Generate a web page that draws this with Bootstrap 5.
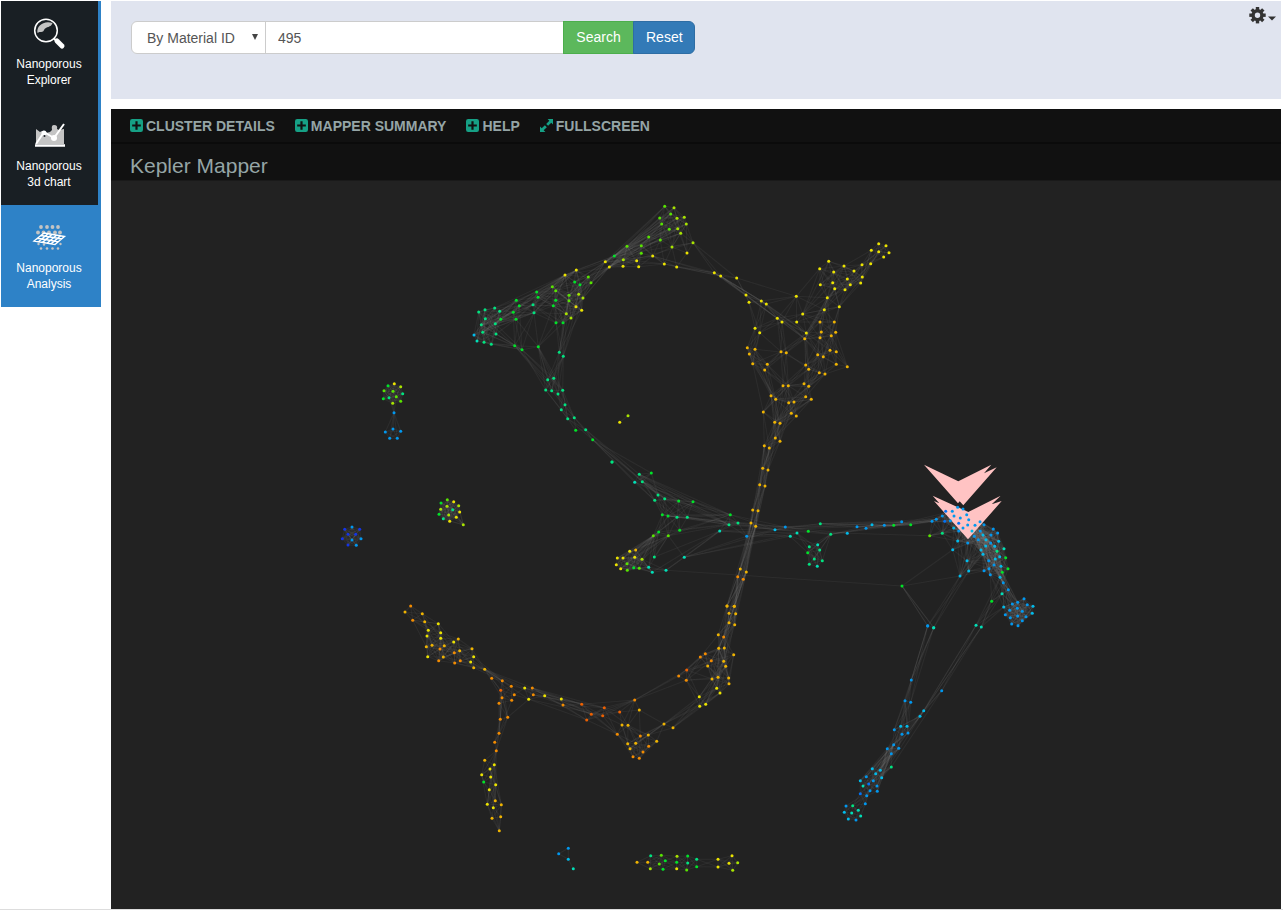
<!DOCTYPE html>
<html lang="en">
<head>
<meta charset="utf-8">
<meta name="viewport" content="width=device-width, initial-scale=1">
<title>Kepler Mapper</title>
<link href="https://cdn.jsdelivr.net/npm/bootstrap@5.3.0/dist/css/bootstrap.min.css" rel="stylesheet">
<style>
body{font-family:"Liberation Sans",Arial,sans-serif;font-size:14px;height:911px;overflow:hidden;background:#fff}
.shell{height:909px;padding:1px 2px 0 1px;gap:10px}
.page-frame{border-bottom:1px solid #ddd;height:910px}
.side{width:100px}
.side a{height:102px;background:#191f24;border-right:3px solid #2e82c7;color:#fff;font-size:12px;line-height:16px;padding-top:12px;padding-right:1px;text-decoration:none}
.side a.active{background:#2e82c7}
.side svg{width:40px;height:40px;margin-bottom:3px}
.searchbar{height:98px;background:#e0e4ef;padding:20px}
.searchbar .input-group{width:564px;height:33px;flex-wrap:nowrap}
.searchbar .form-control,.searchbar .form-select,.searchbar .btn{font-size:14px;line-height:20px;height:33px;padding:5px 12px;color:#555;border-color:#ccc}
.searchbar .form-select{flex:0 0 135px;padding-left:15px;padding-right:20px;background-image:url("data:image/svg+xml,%3Csvg xmlns='http://www.w3.org/2000/svg' viewBox='0 0 8 8'%3E%3Cpath fill='%23444' d='M1 1h6L4 7z'/%3E%3C/svg%3E");background-size:8px 8px;background-position:right 6px top 11px}
.searchbar .btn-find{background:#5cb85c;border-color:#4cae4c;color:#fff;width:71px;line-height:19px}
.searchbar .btn-clear{background:#337ab7;border-color:#2e6da4;color:#fff;width:62px;line-height:19px}
.settings{color:#333;margin:-15px -15px 0 0}
.mapper{margin-top:10px;background:#222}
.mapper-nav{height:35px;background:#111;border-bottom:2px solid #0b0b0b;padding-left:19px;gap:20px}
.mapper-nav a{color:#95a5a6;font-weight:bold;text-decoration:none;line-height:34px;white-space:nowrap}
.mapper-nav svg{width:13px;height:13px;margin-right:3px;fill:#16a085;flex:none}
.mapper h1{height:37px;background:#111;border-bottom:1px solid #1a1a1a;font-size:21px;font-weight:400;color:#95a5a6;line-height:44px;padding-left:19px;margin:0}
#graph{height:728px;width:1170px}
#edges{stroke:#999;stroke-opacity:.095;stroke-width:1.1;fill:none}
</style>
</head>
<body>
<div class="page-frame">
<div class="shell d-flex">
<nav class="side flex-shrink-0">
<a href="#" class="d-flex flex-column align-items-center text-center">
<svg viewBox="0 0 40 40"><circle cx="17" cy="17.500" r="11.300" fill="none" stroke="#fff" stroke-width="1.500"/><path d="M8.500 20C7 13 15 7 23.500 10C22 15 17 13 15 17C14 20 11 18 8.500 20z" fill="#c4c4c4"/><path d="M28 28l5 5" stroke="#fff" stroke-width="5" stroke-linecap="round"/><path d="M24.500 25l4 4" stroke="#fff" stroke-width="2"/></svg>
<span>Nanoporous<br>Explorer</span></a>
<a href="#" class="d-flex flex-column align-items-center text-center">
<svg viewBox="0 0 40 40"><path d="M7 14l4 3 2-1 4 2 4-1 2-2q-1-5 2-5 4 0 3 4l2 1 5-1V29H7z" fill="#c4c4c4"/><path d="M6 30.500h30" stroke="#fff" stroke-width="2.500"/><path d="M7 29l8-12 10 6L35 9" fill="none" stroke="#fff" stroke-width="2"/><circle cx="15" cy="18" r="2.500" fill="#fff"/><circle cx="25" cy="23" r="3" fill="#fff"/><circle cx="15.500" cy="21" r="1" fill="#191f24"/></svg>
<span>Nanoporous<br>3d chart</span></a>
<a href="#" class="active d-flex flex-column align-items-center text-center">
<svg viewBox="0 0 40 40"><g fill="#c4c4c4"><circle cx="12" cy="10" r="1.900"/><circle cx="18" cy="10" r="1.900"/><circle cx="23.500" cy="10" r="1.900"/><circle cx="29" cy="10" r="1.900"/><circle cx="9" cy="15.500" r="1.900"/><circle cx="14.500" cy="15.500" r="1.900"/><circle cx="20" cy="15.500" r="1.900"/><circle cx="26" cy="15.500" r="1.900"/><circle cx="31" cy="15.500" r="1.900"/><circle cx="12" cy="31.500" r="1.300"/><circle cx="18" cy="31.500" r="1.300"/><circle cx="23.500" cy="31.500" r="1.300"/><circle cx="29" cy="31.500" r="1.300"/><circle cx="9.500" cy="27" r="1.200"/><circle cx="15" cy="27.500" r="1.200"/><circle cx="31.500" cy="27" r="1.200"/></g><path d="M15 16L35.500 19.500 26 27.500 5 24zM12 18.500l21 3.500M8.500 21.200l21 3.500M19 16.700l-9.500 8M23 17.400l-9.500 8M27.500 18.200l-9.500 8M31.500 18.900l-9.500 8" fill="none" stroke="#fff" stroke-width="1.400"/></svg>
<span>Nanoporous<br>Analysis</span></a>
</nav>
<main class="flex-grow-1 d-flex flex-column">
<section class="searchbar d-flex justify-content-between">
<div class="input-group">
<select class="form-select"><option>By Material ID</option></select>
<input class="form-control" value="495">
<button class="btn btn-find">Search</button>
<button class="btn btn-clear">Reset</button>
</div>
<div class="settings"><svg class="d-block" width="27" height="18" viewBox="0 0 27 18"><g transform="translate(8.500 9.200)" fill="#333"><circle r="4.400" fill="none" stroke="#333" stroke-width="3.400"/><g id="tooth"><rect x="-1.700" y="-8.200" width="3.400" height="3.400"/><rect x="-1.700" y="4.800" width="3.400" height="3.400"/></g><use href="#tooth" transform="rotate(45)"/><use href="#tooth" transform="rotate(90)"/><use href="#tooth" transform="rotate(135)"/></g><path d="M19 10.500h8l-4 4z" fill="#333"/></svg></div>
</section>
<section class="mapper flex-grow-1">
<nav class="mapper-nav d-flex">
<a href="#" class="d-flex align-items-center"><svg viewBox="0 0 12 12"><path fill-rule="evenodd" d="M2 0h8a2 2 0 0 1 2 2v8a2 2 0 0 1-2 2H2a2 2 0 0 1-2-2V2a2 2 0 0 1 2-2zM5 2v3H2v2h3v3h2V7h3V5H7V2z"/></svg>CLUSTER DETAILS</a>
<a href="#" class="d-flex align-items-center"><svg viewBox="0 0 12 12"><path fill-rule="evenodd" d="M2 0h8a2 2 0 0 1 2 2v8a2 2 0 0 1-2 2H2a2 2 0 0 1-2-2V2a2 2 0 0 1 2-2zM5 2v3H2v2h3v3h2V7h3V5H7V2z"/></svg>MAPPER SUMMARY</a>
<a href="#" class="d-flex align-items-center"><svg viewBox="0 0 12 12"><path fill-rule="evenodd" d="M2 0h8a2 2 0 0 1 2 2v8a2 2 0 0 1-2 2H2a2 2 0 0 1-2-2V2a2 2 0 0 1 2-2zM5 2v3H2v2h3v3h2V7h3V5H7V2z"/></svg>HELP</a>
<a href="#" class="d-flex align-items-center"><svg viewBox="0 0 12 12"><path d="M7 0h5v5l-1.600-1.600L7.500 6.300 5.700 4.500l2.900-2.900zM0 7l1.600 1.600 2.900-2.900 1.800 1.800-2.900 2.900L5 12H0z"/></svg>FULLSCREEN</a>
</nav>
<h1>Kepler Mapper</h1>
<svg id="graph" class="d-block" viewBox="111 181 1170 728">
<g id="edges"></g>
<g fill="#ffc3c3"><path d="M924 464.700L958.300 481.300 991.300 464.700 984 473.300 996.700 467.300 963.300 505.300 959.700 501.300 958 503.300z"/><path d="M932.700 495.700L968.300 512 1000.700 495.700 991.700 504.300 1001.700 501 968 539.300 934 501 939.300 503.300z"/></g>
<g id="nodes"></g>
</svg>
</section>
</main>
</div>
</div>
<script src="https://cdn.jsdelivr.net/npm/bootstrap@5.3.0/dist/js/bootstrap.bundle.min.js"></script>
<script>
const palette={d:'#ee6000',o:'#f48c00',a:'#f0b400',y:'#ece400',l:'#a8e400',e:'#58e400',g:'#00e428',t:'#00e480',c:'#00e0b8',s:'#00bcec',b:'#0098f0',B:'#0074f8',n:'#1434e8'};
// Each cluster: origin, linking distance, and nodes in thirds of a pixel (x y colour).
const clusters=[
[460,190,62,'614 49 e 642 53 l 632 72 e 599 84 e 651 85 l 673 82 l 605 102 e 679 102 l 628 118 e 653 116 l 662 130 l 566 141 e 601 150 e 699 158 l 501 169 e 544 167 e 636 171 l 544 190 e 578 198 y 681 189 y 463 198 g 490 209 l 530 212 y 436 215 y 613 222 y 448 231 y 489 229 y 536 230 y 650 231 y'],
[460,190,72,'349 240 y 315 255 y 385 261 e 344 276 g 360 284 g 393 278 e 277 290 e 287 302 e 230 306 g 234 322 g 356 313 l 327 316 e 369 324 l 327 332 e 287 331 g 169 331 g 178 347 g 219 344 t 280 347 g 348 350 y 365 361 y 319 371 l 333 384 l 222 368 t 160 367 g 168 388 g 288 398 g 309 398 g 56 366 t 75 359 t 104 354 t 119 364 t 76 386 t 64 404 t 106 401 t 122 388 g 68 427 t 42 435 s 51 453 c 72 457 t 94 463 t 108 432 t 164 467 g 186 479 g 235 470 g'],
[460,190,50,'298 487 t 310 499 t 281 565 t 263 569 t 257 600 t 275 602 t 308 601 t 294 612 t 315 644 t 304 659 t 343 683 t 323 686 t 377 719 t 347 721 g 398 749 g'],
[460,190,5,'456 816 t'],[460,190,40,'479 697 y 504 677 l'],
[700,220,64,'43 158 y 62 168 y 110 174 y 138 225 y 147 247 y 184 243 y 199 252 y 289 229 y 308 282 y 290 306 y 232 295 y 246 306 y 165 325 y 179 338 y 319 339 y 314 356 a 142 383 a 165 388 a 148 402 a 158 431 a 202 433 a 194 450 a 243 395 a 259 398 a 317 435 a 326 448 a 358 458 a 375 462 a 353 404 a 370 410 a 390 391 a 409 395 a 409 433 a 442 440 a 360 306 a 403 306 a 364 336 a 360 353 a 394 347 a 407 337 a 373 269 y 418 260 y 382 233 y 359 146 y 386 124 y 401 156 y 432 138 y 398 188 y 361 194 y 404 206 y 435 209 y 451 194 y 442 177 y 462 153 y 486 134 y 487 171 y 482 189 y 512 131 y 514 91 y 536 71 y 558 77 y 536 95 y 567 98 y 551 111 y'],
[700,220,62,'249 497 a 265 497 a 312 491 a 326 499 a 213 527 a 227 538 a 266 548 a 282 546 a 317 530 a 334 538 a 190 576 a 274 580 a 289 588 a 224 607 a 240 610 a 226 654 a 240 664 a 193 677 a 208 684 a 188 745 a 204 750 a 179 794 a 195 798 a'],
[590,450,62,'66 36 t 148 73 t 184 69 g 157 95 t 134 97 c 204 135 t 194 151 t 224 146 t 266 153 g 309 155 g 217 194 g 234 198 g 261 202 t 292 202 t 269 241 g 206 246 g 190 257 e 235 257 e 193 321 t 283 322 c 389 243 c 417 224 t 444 219 t 421 194 g 470 259 b'],
[590,450,56,'119 304 y 137 300 a 82 324 y 99 324 y 134 322 y 156 328 l 79 344 y 111 341 e 92 356 y 112 361 e 131 353 g 148 355 e 176 352 c 187 367 c 228 361 c'],
[590,450,25,'488 180 a 504 182 a 483 219 a 497 229 a 451 357 a 443 380 o 469 366 a 460 388 o 411 468 a 433 469 a'],
[590,450,30,'555 239 s 586 231 b 601 259 c 621 249 c 655 244 g 691 221 t 722 253 t 772 250 s 801 230 b'],
[590,450,60,'658 290 t 683 284 c 689 300 t 653 308 g 673 327 t 697 332 t 658 343 t 682 349 c'],
[860,450,56,'18 235 b 36 224 s 73 226 b 101 226 g 125 215 b 152 224 g 209 257 e 216 214 b 229 208 b 247 250 t 247 198 b 257 184 B 277 184 b 254 214 B 271 212 b 282 198 b 296 220 B 301 204 b 293 172 b 309 177 b 320 194 b 326 209 b 281 234 s 296 243 b 309 234 b 323 225 b 345 226 b 360 215 b 336 243 s 372 224 b 293 273 s 278 299 s 323 279 b 343 259 b 355 269 b 361 243 b 369 255 s 378 269 s 393 255 b 400 237 b 413 249 b 416 274 s 392 279 b 404 289 s 377 288 s 363 300 s 369 313 s 411 304 t 432 296 c 406 327 s 419 320 s 437 323 g 386 332 b 402 345 b 423 349 s 444 356 g 387 356 b 372 362 b 391 374 b 427 367 g 420 382 s 430 398 b 445 419 b 426 431 c 395 454 g 321 332 s 326 363 s 300 378 s'],
[860,450,70,'492 446 b 473 457 b 457 462 b 502 464 b 519 469 s 431 471 s 472 475 b 449 481 b 487 484 b 517 490 s 436 494 b 451 503 b 473 498 b 498 500 b 487 512 b 455 522 b 474 527 b'],
[860,450,18,'126 408 g 203 528 b 221 533 c 348 526 c 364 531 c'],
[390,590,62,'62 48 o 45 66 a 68 91 o 97 71 a 104 95 a 145 101 y 115 121 y 111 138 y 152 128 y 152 145 y 205 147 a 191 156 y 109 170 a 126 166 a 163 167 a 150 177 o 209 182 a 246 176 a 193 188 o 113 200 y 160 201 a 251 200 y 146 212 o 211 212 o 194 219 o 242 216 y 251 233 a 284 238 a'],
[390,590,50,'305 265 o 337 272 o 364 289 o 404 294 y 427 294 o 332 301 d 373 314 o 430 314 o 336 323 o 416 328 y 365 331 o 327 340 o 464 317 y 514 327 y 519 345 o 353 382 o 331 388 o 327 430 o 314 457 o 319 482 o 284 511 a 313 524 y 300 537 y 275 554 y 302 561 y 281 576 g 317 584 y 298 599 y 316 632 a 292 643 y 334 644 a 310 653 y 332 680 a 306 685 a 328 722 a'],
[540,590,62,'125 343 d 140 390 d 154 373 d 188 377 d 193 353 d 239 366 d 232 433 o 284 330 o 298 360 a 246 405 a 264 406 a 301 438 o 325 435 a 263 461 a 287 460 a 270 476 a 309 486 o 326 469 o 350 454 a 279 500 o 298 505 o 372 402 a 399 413 a'],
[540,590,60,'561 48 a 583 49 a 567 70 a 587 71 a 567 98 a 584 104 a 535 134 a 551 141 o 536 175 a 553 174 a 581 194 a 496 191 o 481 201 o 514 212 o 503 228 a 551 214 a 557 229 a 516 267 a 534 262 a 566 264 a 567 281 a 530 295 y 540 309 y 478 320 y 497 343 y 479 349 y 440 240 d 416 258 o 439 271 o'],
[540,590,36,'56 791 b 85 775 b 85 808 s 100 836 c'],
[540,590,54,'291 817 a 323 817 a 332 797 t 364 796 e 331 836 l 358 822 e 376 812 g 369 838 g 411 799 l 410 817 g 410 836 y 443 798 g 443 819 t 440 840 e 470 808 t 470 830 g'],
[540,590,66,'534 808 y 534 831 y 576 797 y 567 820 y 593 818 l 578 841 l'],
[830,600,42,'293 77 b 311 83 c 244 240 b 225 302 b 242 307 b 335 272 b 281 332 s 270 349 s 212 379 s 231 379 s 193 389 b 216 403 b 234 399 b 191 434 b 206 445 b 172 446 b 184 461 b 184 501 t 127 506 s 151 511 s 137 521 s 155 533 s 109 530 b 91 542 s 130 542 b 116 552 B 99 558 c 141 558 b 120 572 b 142 574 b 91 581 B 110 587 b 106 611 b 48 618 b 68 617 t 85 631 c 43 637 s 65 639 c 92 648 c 55 657 s 78 660 b'],
[330,370,60,'193 41 y 174 47 g 212 50 l 162 62 e 189 64 e 218 71 t 199 80 e 177 83 t 160 86 g 212 94 e 188 100 l'],
[330,370,52,'192 128 b 189 177 b 166 186 b 212 184 b 179 205 b 202 205 b'],
[330,370,62,'352 389 e 333 399 g 371 395 y 351 409 l 386 407 l 332 418 l 368 419 t 389 426 y 327 433 g 356 435 l 379 442 y 340 446 t 359 454 y 400 464 l'],
[330,370,64,'66 471 b 44 478 n 89 478 n 54 493 n 77 493 n 37 506 n 93 506 b 66 510 b 54 525 n 79 526 b']
];
// Bundles join every node within one circle to every node within another: x y r x y r
const bundles=[
[609,262,10,682,222,24],[606,262,7,582,290,18],[570,272,10,540,295,22],[576,272,12,609,262,10],[570,272,9,500,310,14],[605,262,6,640,255,30],
[484,325,14,520,306,16],[534,312,6,538,346,4],[495,340,12,518,348,6],[517,310,8,518,348,6],[560,322,7,538,347,4],[485,325,14,518,348,5],[534,312,6,518,348,6],[553,306,6,538,347,3],[560,322,7,561,354,5],[582,300,14,561,354,5],[561,354,5,554,388,14],[520,348,7,552,386,14],[538,346,3,552,386,12],[554,388,10,572,415,12],[572,415,10,590,436,8],[588,434,8,640,476,12],[590,438,5,660,500,12],[638,475,8,660,500,12],[640,476,8,680,500,10],[665,499,12,670,516,12],[671,516,12,660,533,12],[662,533,12,632,560,16],[670,515,18,735,522,12],[640,475,10,732,520,10],[670,533,12,735,522,12],[668,560,20,722,532,8],[684,557,3,747,536,3],[684,557,3,790,532,12],[667,570,3,684,557,3],[662,535,10,655,562,10],[732,520,14,780,528,7],[690,516,6,780,528,7],[747,536,3,790,532,10],[719,531,3,790,532,10],[780,528,12,830,530,18],[795,534,8,812,552,10],[825,534,10,817,552,12],[830,530,16,872,526,14],[860,526,12,900,523,14],[885,525,13,936,521,6],[893,525,6,946,516,14],[780,528,8,900,523,10],[830,530,16,929,521,8],[847,533,2,929,536,2],[902,586,2,955,572,10],[902,586,2,942,548,12],[902,586,2,953,550,2],[929,536,2,955,532,12],[667,570,2,902,586,1],[902,586,2,932,627,7],
[690,240,8,717,273,7],[690,240,8,737,278,2],[665,262,16,716,273,6],[717,274,8,764,302,8],[737,278,2,797,296,3],[716,273,6,779,320,6],[763,302,8,797,296,4],[779,320,6,797,296,4],[764,302,8,806,334,8],[779,320,7,806,334,7],[764,302,7,757,330,6],[748,300,4,757,330,6],[779,320,6,757,330,6],[757,330,7,749,350,8],[753,350,12,766,368,8],[806,334,8,783,352,6],[783,352,6,766,368,8],[779,320,6,783,352,6],[783,352,6,783,385,8],[766,368,6,783,386,8],[783,385,8,806,367,6],[753,354,12,772,397,8],[766,368,6,772,397,8],[763,412,2,753,364,4],[763,412,2,784,386,7],[797,296,4,803,315,4],[797,296,4,820,270,12],[797,296,4,827,298,3],[803,315,4,827,270,16],[806,334,7,808,367,7],[806,334,7,827,298,14],[806,334,7,820,357,12],[825,330,16,820,357,12],[803,315,10,830,308,16],[833,292,15,827,270,16],[840,307,2,863,285,10],[827,298,12,846,286,12],[824,330,16,824,302,10],[820,358,10,806,383,8],[847,366,2,834,332,8],[808,367,8,806,385,10],[822,373,8,806,385,10],[806,385,8,783,386,8],[822,373,8,794,402,14],[802,395,16,778,422,10],[784,386,10,777,422,8],[794,402,14,778,440,8],[763,412,2,766,447,5],[773,398,5,776,440,8],[776,423,6,767,447,5],[777,439,6,765,469,5],[778,423,6,765,469,5],[767,447,5,762,486,5],[765,469,5,755,512,6],[762,486,5,755,524,5],[767,447,5,755,524,5],[755,512,5,742,575,10],[755,524,5,742,575,10],[762,486,5,742,575,8],[742,575,10,731,612,12],[742,575,10,733,620,9],[755,524,5,731,612,12],[731,612,12,721,648,12],[731,622,10,724,663,12],[720,650,12,716,680,14],[724,663,12,703,703,8],[733,655,2,728,682,6],[720,650,12,703,658,8],[703,656,10,680,674,10],[686,680,3,699,697,3],[686,680,3,714,678,6],[682,674,10,635,702,8],[700,702,6,668,726,10],[718,692,8,668,726,10],[635,702,8,625,727,6],[664,724,3,635,738,12],[639,710,2,664,724,3],[635,702,8,593,713,15],[586,709,14,620,734,6],[563,704,4,587,712,15],[548,699,20,600,708,20],[485,669,3,530,690,10],[485,669,3,505,688,14],[474,665,10,502,682,8],[471,655,15,485,669,4],[501,688,10,504,717,8],[507,700,9,500,731,8],[528,699,4,507,717,3],[504,717,8,498,745,10],[528,690,6,570,704,16],[504,700,8,499,732,5],[499,732,4,497,750,5],[497,750,4,493,774,12],[493,774,12,495,806,10],[495,810,12,499,830,2],
[960,575,12,930,626,7],[960,575,12,970,540,14],[966,568,12,985,550,10],[955,533,10,982,543,10],[970,525,12,990,545,12],[980,540,12,1000,580,12],[1000,580,12,1014,606,12],[992,560,12,1002,582,8],[1004,588,8,1013,606,10],[1002,593,3,978,626,6],[991,601,3,978,626,6],[1003,605,5,978,626,6],[1000,580,4,978,626,6],
[930,626,7,908,701,6],[930,626,7,911,680,3],[911,680,2,900,730,8],[908,701,6,904,731,12],[978,626,6,921,713,6],[978,626,6,941,691,2],[941,691,2,921,713,6],[921,713,6,904,731,10],[941,691,2,892,767,2],[904,731,10,892,748,8],[892,748,9,874,778,14],[921,713,6,878,772,7],[892,767,2,870,790,12],[866,794,8,854,808,9],
[394,400,6,394,413,2],[394,413,2,393,434,10],[463,525,2,452,520,10],[717,863,6,697,863,7],[863,285,8,875,252,6],[846,290,10,866,270,8]
];
const nodes=[],seen=new Set(),lines=[];
const link=(a,b)=>{const k=Math.min(a,b)+'-'+Math.max(a,b);if(a===b||seen.has(k))return;seen.add(k);const p=nodes[a],q=nodes[b];lines.push(`M${p.x.toFixed(1)} ${p.y.toFixed(1)}L${q.x.toFixed(1)} ${q.y.toFixed(1)}`)};
for(const [ox,oy,reach,text] of clusters){
  const t=text.split(' '),start=nodes.length;
  for(let i=0;i<t.length;i+=3)nodes.push({x:ox+t[i]/3,y:oy+t[i+1]/3,c:palette[t[i+2]]});
  for(let a=start;a<nodes.length;a++)for(let b=a+1;b<nodes.length;b++){
    const d=Math.hypot(nodes[a].x-nodes[b].x,nodes[a].y-nodes[b].y)*3;
    // a share of the slightly longer edges keeps the meshes irregular
    if(d<reach||(reach>55&&d<reach*1.5&&(a*13+b*7)%10<5))link(a,b);
  }
}
const within=(x,y,r)=>nodes.map((n,i)=>Math.hypot(n.x-x,n.y-y)<=r?i:-1).filter(i=>i>=0);
for(const [x,y,r,u,v,w] of bundles){const A=within(x,y,r),B=within(u,v,w);for(const a of A)for(const b of B)if((a*7+b*5)%10<6||A.length*B.length<7)link(a,b)}
document.getElementById('edges').innerHTML=lines.map(d=>`<path d="${d}"/>`).join('');
document.getElementById('nodes').innerHTML=nodes.map(n=>`<circle cx="${n.x.toFixed(1)}" cy="${n.y.toFixed(1)}" r="1.5" fill="${n.c}"/>`).join('');
</script>
</body>
</html>
